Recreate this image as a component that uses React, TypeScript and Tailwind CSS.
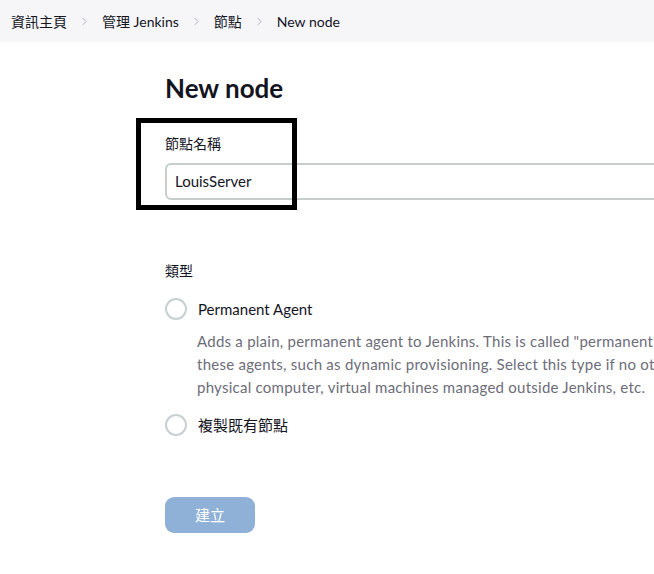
import { ChevronRight } from 'lucide-react'

export default function App() {
  const font = { fontFamily: 'Lato, "Noto Sans CJK TC", sans-serif' }
  return (
    <div className="relative w-[654px] h-[574px] overflow-hidden bg-white text-[#14141f]" style={font}>
      {/* breadcrumb */}
      <div className="h-[42px] bg-[#f6f6f9] flex items-center pl-[11px] text-[14px] whitespace-nowrap">
        <span>資訊主頁</span>
        <ChevronRight size={13} strokeWidth={1.5} className="mx-[11px] text-[#a0a0aa]" />
        <span>管理 Jenkins</span>
        <ChevronRight size={13} strokeWidth={1.5} className="mx-[11px] text-[#a0a0aa]" />
        <span>節點</span>
        <ChevronRight size={13} strokeWidth={1.5} className="mx-[11px] text-[#a0a0aa]" />
        <span>New node</span>
      </div>

      <div className="pl-[165px] pt-[28px] w-[1200px]">
        <h1 className="text-[26px] font-bold leading-[36px]">New node</h1>

        <div className="mt-[28px]">
          <label className="block text-[14px] leading-[20px]">節點名稱</label>
          <div className="mt-[9px] h-[37px] w-[800px] border-2 border-[#c5cdcd] rounded-[6px] flex items-center pl-[8px] text-[15px]">
            LouisServer
          </div>
        </div>

        <div className="mt-[61px] text-[14px] leading-[20px]">類型</div>

        <div className="mt-[17px] flex items-center gap-[11px]">
          <div className="w-[22px] h-[22px] rounded-full border-2 border-[#c8d0d2]" />
          <span className="text-[15px]">Permanent Agent</span>
        </div>
        <div className="mt-[9px] pl-[32px] text-[15px] tracking-[0.25px] leading-[23px] text-[#6d6d7a] whitespace-nowrap">
          <div>Adds a plain, permanent agent to Jenkins. This is called "permanent" because it doesn't provide higher level of integration with</div>
          <div>these agents, such as dynamic provisioning. Select this type if no other agent types apply — for example such as when you are adding a</div>
          <div>physical computer, virtual machines managed outside Jenkins, etc.</div>
        </div>

        <div className="mt-[15px] flex items-center gap-[11px]">
          <div className="w-[22px] h-[22px] rounded-full border-2 border-[#c8d0d2]" />
          <span className="text-[15px]">複製既有節點</span>
        </div>

        <button className="mt-[61px] w-[90px] h-[36px] rounded-[9px] bg-[#8fb1d7] text-white text-[15px]">
          建立
        </button>
      </div>

      {/* annotation box */}
      <div className="absolute left-[136px] top-[118px] w-[161px] h-[92px] border-[5px] border-black" />
    </div>
  )
}
